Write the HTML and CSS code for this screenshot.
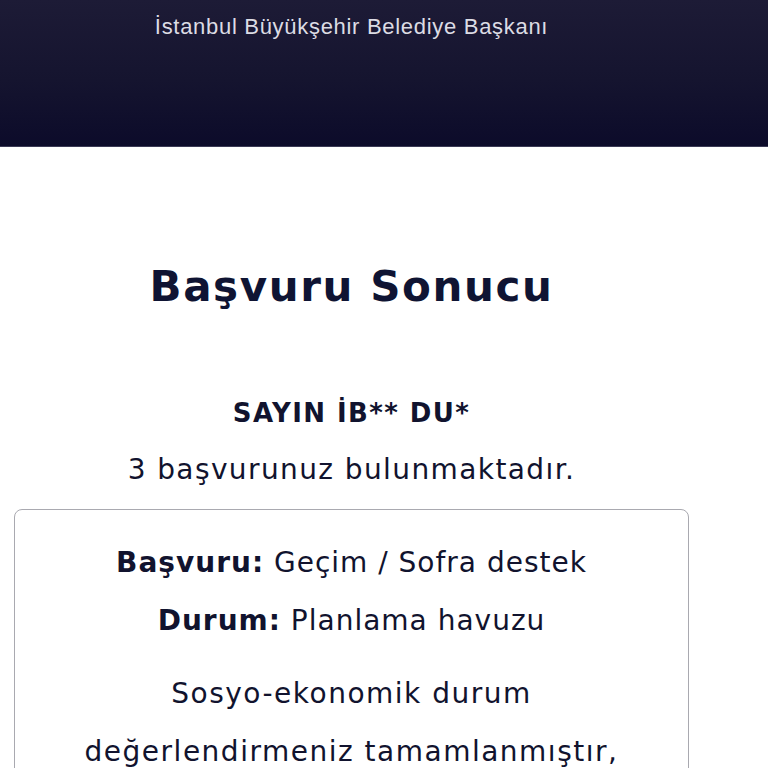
FILE: index.html
```html
<!DOCTYPE html>
<html lang="tr">
<head>
<meta charset="utf-8">
<title>Başvuru Sonucu</title>
<link rel="stylesheet" href="styles.css">
</head>
<body>
<header class="top">
  <p class="top-title">İstanbul Büyükşehir Belediye Başkanı</p>
</header>
<main class="wrap">
  <h1 class="title">Başvuru Sonucu</h1>
  <p class="greet">SAYIN İB** DU*</p>
  <p class="count">3 başvurunuz bulunmaktadır.</p>
  <section class="card">
    <p class="row"><b>Başvuru:</b> Geçim / Sofra destek</p>
    <p class="row"><b>Durum:</b> Planlama havuzu</p>
    <p class="note">Sosyo-ekonomik durum<br>değerlendirmeniz tamamlanmıştır,<br>başvurunuz planlama havuzuna alınmıştır.</p>
  </section>
</main>
</body>
</html>
```

FILE: styles.css
```css
html, body {
  margin: 0;
  padding: 0;
  background: #ffffff;
}
body {
  font-family: "DejaVu Sans", "Noto Sans", sans-serif;
  color: #11132e;
}
.top {
  height: 147px;
  background: linear-gradient(180deg, #1d1b36 0%, #15142f 55%, #0c0b2a 100%);
  border-bottom: 1px solid #3b3a55;
  box-sizing: border-box;
}
.top-title {
  margin: 0;
  width: 703px;
  padding-top: 14px;
  text-align: center;
  font-family: "Liberation Sans", Arial, sans-serif;
  font-size: 22px;
  line-height: 26px;
  letter-spacing: 0.7px;
  color: #dcdce4;
}
.wrap {
  width: 675px;
  margin-left: 14px;
  text-align: center;
}
.title {
  margin: 116px 0 0;
  font-size: 42px;
  line-height: 48px;
  letter-spacing: 1.6px;
  font-weight: 700;
  color: #0f1433;
}
.greet {
  margin: 87px 0 0;
  font-size: 26px;
  line-height: 30px;
  letter-spacing: 1.4px;
  font-weight: 700;
}
.count {
  margin: 24px 0 0;
  font-size: 28px;
  line-height: 36px;
  letter-spacing: 1.4px;
}
.card {
  margin-top: 21px;
  border: 1.5px solid #a9a9b0;
  border-radius: 8px;
  padding: 24px 10px 30px;
}
.row {
  margin: 0;
  font-size: 28px;
  line-height: 58px;
  letter-spacing: 1px;
}
.row b {
  font-weight: 700;
}
.note {
  margin: 15px 0 0;
  font-size: 28px;
  line-height: 58px;
  letter-spacing: 1.5px;
}
```
